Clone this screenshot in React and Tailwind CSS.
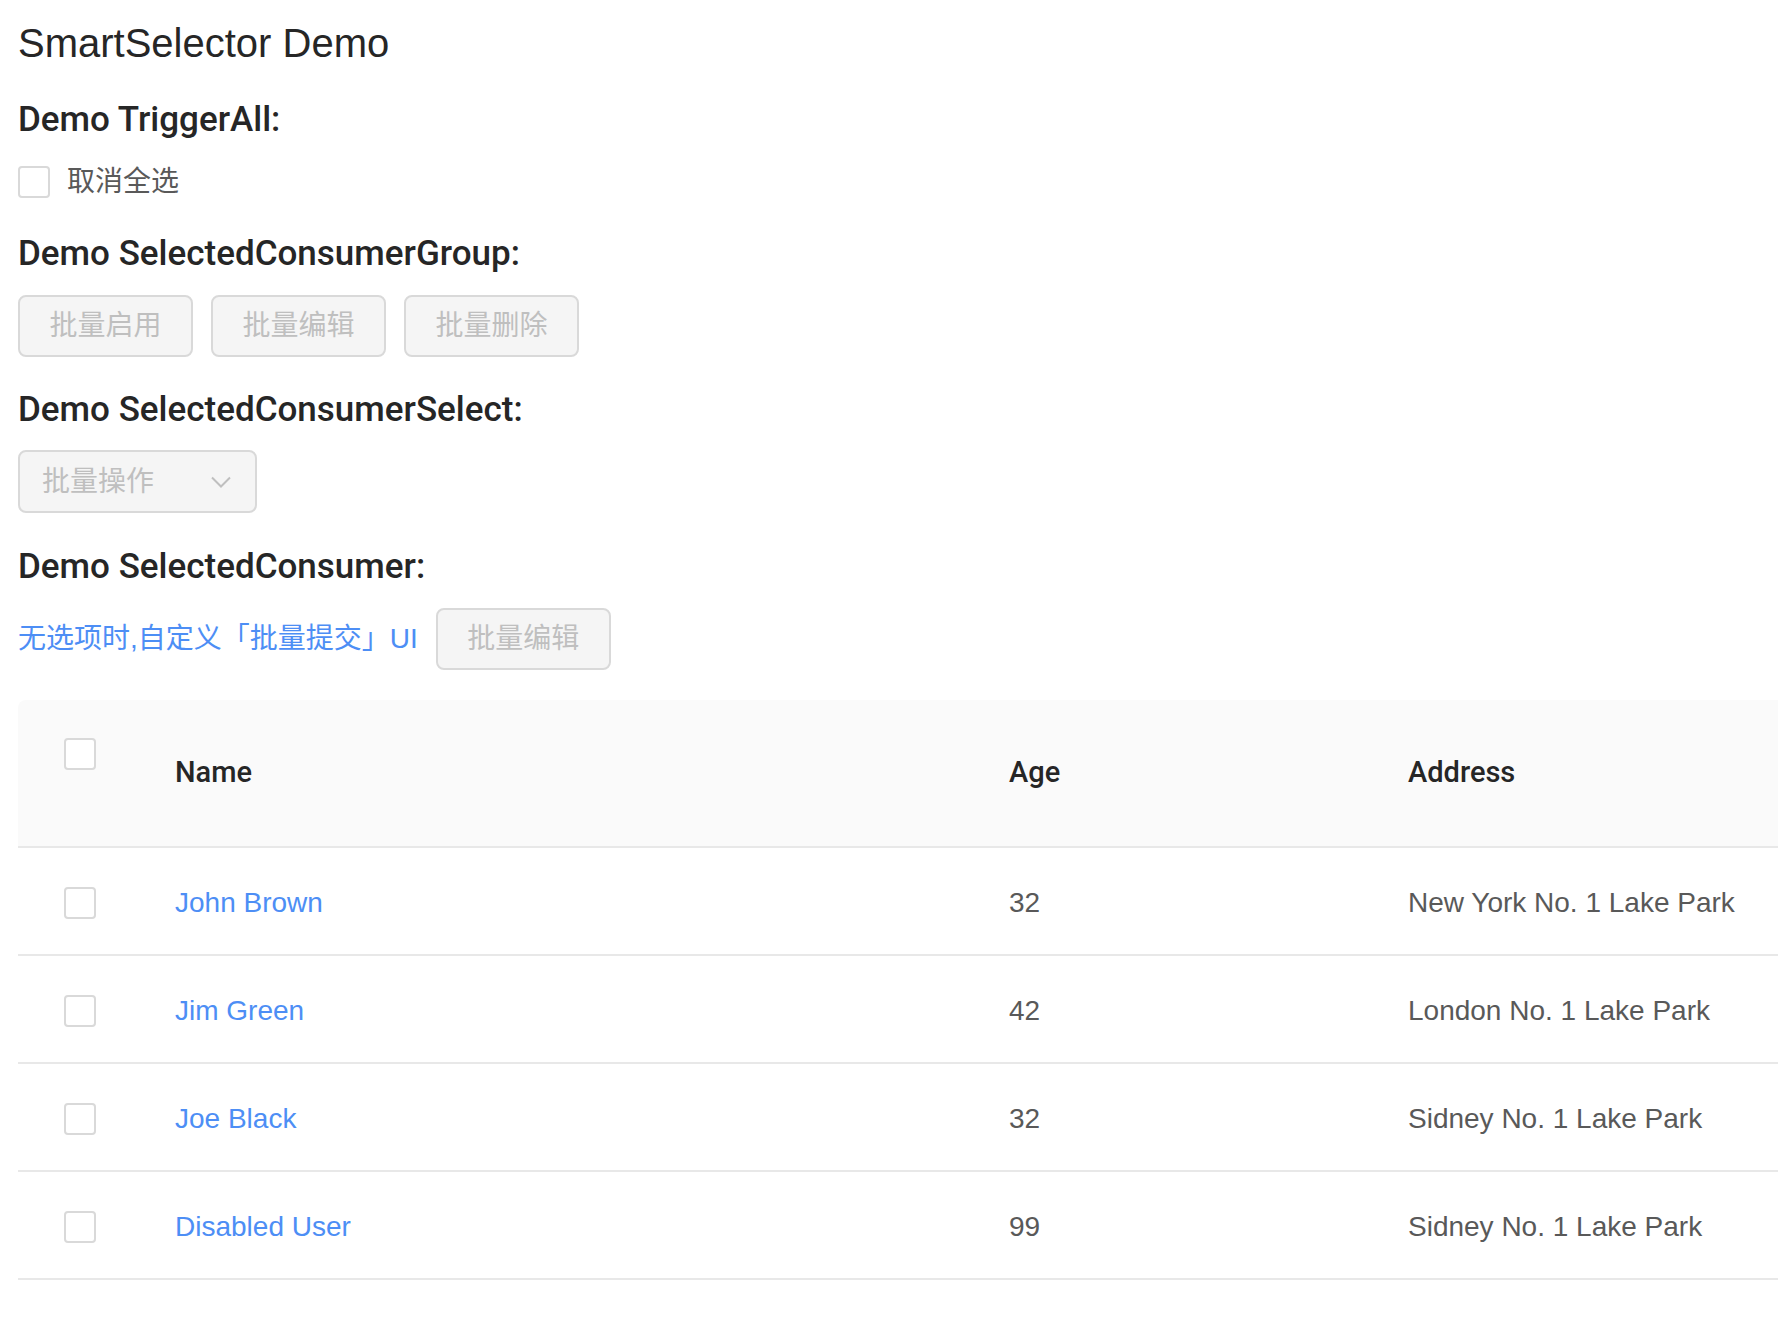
import React from 'react';

const font = { fontFamily: '"Liberation Sans", "Noto Sans CJK SC", sans-serif' };
const headFont = { fontFamily: 'Roboto, "Liberation Sans", sans-serif' };

const rows = [
  { name: 'John Brown', age: 32, address: 'New York No. 1 Lake Park' },
  { name: 'Jim Green', age: 42, address: 'London No. 1 Lake Park' },
  { name: 'Joe Black', age: 32, address: 'Sidney No. 1 Lake Park' },
  { name: 'Disabled User', age: 99, address: 'Sidney No. 1 Lake Park' },
];

const Checkbox = () => (
  <span className="inline-block w-[32px] h-[32px] rounded-[4px] border-2 border-[#d9d9d9] bg-white shrink-0" />
);

const DisabledButton = ({ children, className = '' }) => (
  <button
    type="button"
    disabled
    className={`h-[62px] w-[175px] rounded-[8px] border-2 border-[#d9d9d9] bg-[#f5f5f5] text-[28px] text-[#bfbfbf] leading-none ${className}`}
  >
    {children}
  </button>
);

const Heading = ({ children, className = '' }) => (
  <h3 className={`text-[35px] leading-[48px] font-medium text-[#262626] ${className}`} style={headFont}>
    {children}
  </h3>
);

export default function App() {
  return (
    <div className="min-h-screen bg-white pl-[18px] pt-[19px]" style={font}>
      <h1 className="text-[40px] leading-[48px] text-[#262626]">SmartSelector Demo</h1>

      <Heading className="mt-[29px]">Demo TriggerAll:</Heading>
      <label className="mt-[22px] flex items-center gap-[17px] h-[32px]">
        <Checkbox />
        <span className="text-[28px] text-[#595959]">取消全选</span>
      </label>

      <Heading className="mt-[32px]">Demo SelectedConsumerGroup:</Heading>
      <div className="mt-[17px] flex gap-[18px]">
        <DisabledButton>批量启用</DisabledButton>
        <DisabledButton>批量编辑</DisabledButton>
        <DisabledButton>批量删除</DisabledButton>
      </div>

      <Heading className="mt-[29px]">Demo SelectedConsumerSelect:</Heading>
      <div className="mt-[16px] w-[239px] h-[63px] rounded-[8px] border-2 border-[#d9d9d9] bg-[#f5f5f5] flex items-center justify-between pl-[22px] pr-[24px]">
        <span className="text-[28px] text-[#bfbfbf]">批量操作</span>
        <svg width="20" height="12" viewBox="0 0 20 12" fill="none">
          <path d="M1 1.5 L10 10.5 L19 1.5" stroke="#bfbfbf" strokeWidth="2" />
        </svg>
      </div>

      <Heading className="mt-[30px]">Demo SelectedConsumer:</Heading>
      <div className="mt-[17px] flex items-center gap-[18px]">
        <span className="text-[28px] text-[#4d8ef5]">无选项时,自定义「批量提交」UI</span>
        <DisabledButton>批量编辑</DisabledButton>
      </div>

      <div className="mt-[30px] w-full">
        <div className="flex h-[148px] bg-[#fafafa] rounded-tl-[8px] border-b-2 border-[#e8e8e8]">
          <div className="w-[157px] pl-[46px] pt-[38px]">
            <Checkbox />
          </div>
          <div className="w-[834px] flex items-center text-[29px] font-medium text-[#262626]" style={headFont}>Name</div>
          <div className="w-[399px] flex items-center text-[29px] font-medium text-[#262626]" style={headFont}>Age</div>
          <div className="flex-1 flex items-center text-[29px] font-medium text-[#262626]" style={headFont}>Address</div>
        </div>
        {rows.map((r) => (
          <div key={r.name} className="flex h-[108px] items-center border-b-2 border-[#e8e8e8] pt-[3px]">
            <div className="w-[157px] pl-[46px] flex items-center">
              <Checkbox />
            </div>
            <div className="w-[834px] text-[28px] text-[#4d8ef5]">{r.name}</div>
            <div className="w-[399px] text-[28px] text-[#595959]">{r.age}</div>
            <div className="flex-1 text-[28px] text-[#595959]">{r.address}</div>
          </div>
        ))}
      </div>
    </div>
  );
}
